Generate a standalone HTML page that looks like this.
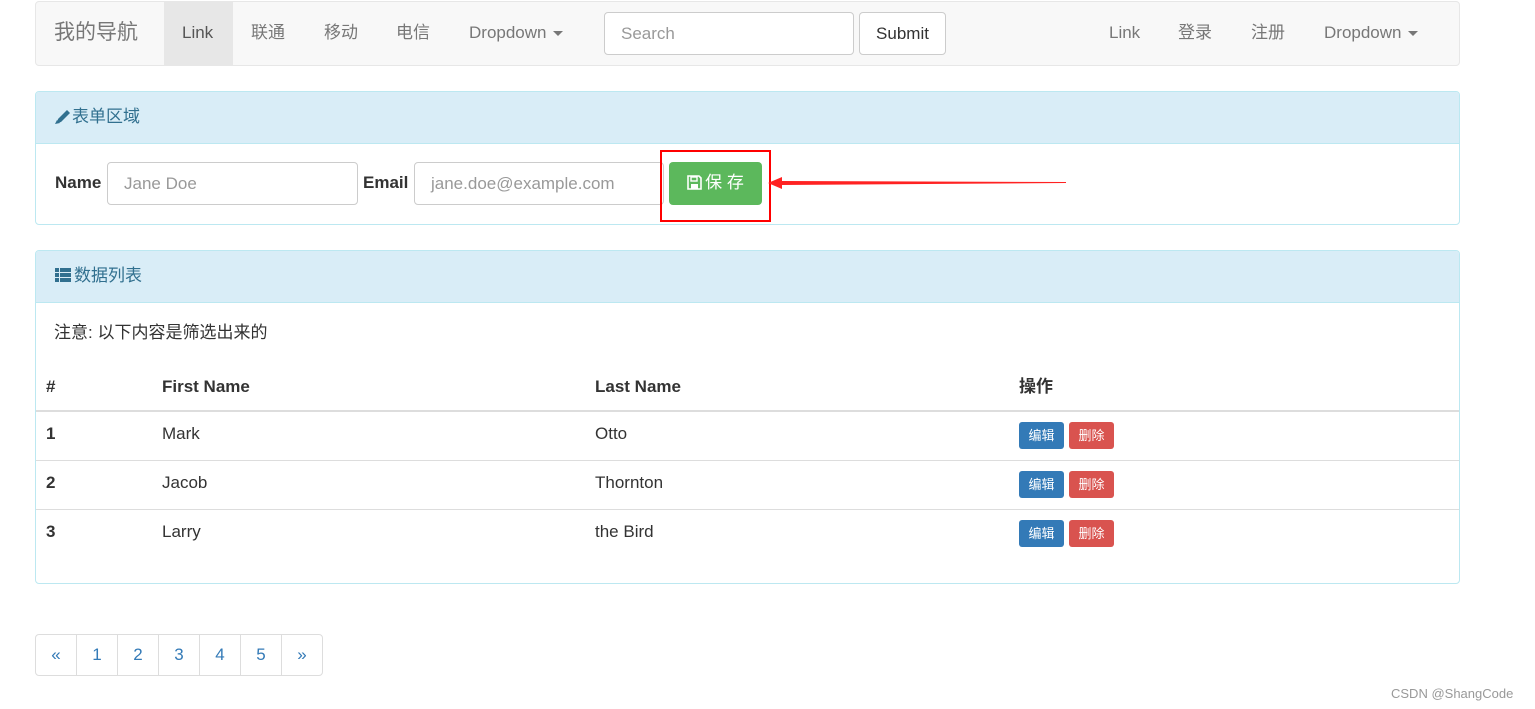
<!DOCTYPE html>
<html><head><meta charset="utf-8"><style>
*{box-sizing:border-box}
body{margin:0;width:1535px;height:709px;background:#fff;font-family:"Liberation Sans","Noto Sans CJK SC",sans-serif;font-size:17px;line-height:20px;color:#333;position:relative;overflow:hidden}
.a{position:absolute}
.nav{left:35px;top:1px;width:1425px;height:65px;background:#f8f8f8;border:1px solid #e7e7e7;border-radius:4px}
.ni{color:#777;top:23px;height:20px}
.inp{border:1px solid #ccc;border-radius:4px;background:#fff;color:#999;padding-left:16px;line-height:41px}
.panel{border:1px solid #bce8f1;border-radius:4px;left:35px;width:1425px;overflow:hidden}
.ph{background:#d9edf7;color:#31708f;height:52px;border-bottom:1px solid #bce8f1;padding:15px 18px;font-size:17px}
.caret{display:inline-block;border-top:5px solid #777;border-left:5px solid transparent;border-right:5px solid transparent;vertical-align:middle;margin-left:6px}
.btn{color:#fff;font-size:13px;border-radius:3px;width:45px;height:27px;line-height:27px;text-align:center}
.pg{top:634px;height:42px;width:42px;border:1px solid #ddd;color:#337ab7;text-align:center;line-height:40px}
</style></head><body>
<div class="a nav"></div>
<div class="a" style="left:54px;top:22px;font-size:21px;line-height:22px;color:#777">我的导航</div>
<div class="a" style="left:164px;top:2px;width:69px;height:63px;background:#e7e7e7"></div>
<div class="a ni" style="left:182px;color:#555">Link</div>
<div class="a ni" style="left:251px">联通</div>
<div class="a ni" style="left:324px">移动</div>
<div class="a ni" style="left:396px">电信</div>
<div class="a ni" style="left:469px">Dropdown<span class="caret"></span></div>
<div class="a inp" style="left:604px;top:12px;width:250px;height:43px">Search</div>
<div class="a" style="left:859px;top:12px;width:87px;height:43px;border:1px solid #ccc;border-radius:4px;background:#fff;text-align:center;line-height:41px">Submit</div>
<div class="a ni" style="left:1109px">Link</div>
<div class="a ni" style="left:1178px">登录</div>
<div class="a ni" style="left:1251px">注册</div>
<div class="a ni" style="left:1324px">Dropdown<span class="caret"></span></div>

<div class="a panel" style="top:91px;height:134px"><div class="ph"><svg width="18" height="16" viewBox="0 0 18 16" style="vertical-align:-2px"><path d="M3 15 L4 11 L13 2 L16 5 L7 14 Z" fill="#31708f"/><path d="M1 16 L3 12 L6 15 Z" fill="#31708f"/></svg>表单区域</div></div>
<div class="a" style="left:55px;top:173px;font-weight:bold">Name</div>
<div class="a inp" style="left:107px;top:162px;width:251px;height:43px">Jane Doe</div>
<div class="a" style="left:363px;top:173px;font-weight:bold">Email</div>
<div class="a inp" style="left:414px;top:162px;width:250px;height:43px">jane.doe@example.com</div>
<div class="a" style="left:669px;top:162px;width:93px;height:43px;background:#5cb85c;border-radius:4px;color:#fff;text-align:center;line-height:42px"><svg width="15" height="15" viewBox="0 0 15 15" style="vertical-align:-2px;margin-right:3px"><path d="M1 1 H12 L14 3 V14 H1 Z" fill="none" stroke="#fff" stroke-width="1.6"/><rect x="4" y="2" width="6" height="4" fill="none" stroke="#fff" stroke-width="1.4"/><rect x="4" y="9" width="7" height="5" fill="#fff"/></svg>保 存</div>
<div class="a" style="left:660px;top:150px;width:111px;height:72px;border:2px solid #f00"></div>
<svg class="a" style="left:768px;top:175px" width="300" height="16"><polygon points="0,8 14,2 14,6 298,7 298,8 14,10 14,14" fill="#f22"/></svg>

<div class="a panel" style="top:250px;height:334px"><div class="ph"><svg width="18" height="16" viewBox="0 0 18 16" style="vertical-align:-2px;margin-right:2px"><rect x="1" y="1" width="4" height="4" fill="#31708f"/><rect x="6" y="1" width="11" height="4" fill="#31708f"/><rect x="1" y="6" width="4" height="4" fill="#31708f"/><rect x="6" y="6" width="11" height="4" fill="#31708f"/><rect x="1" y="11" width="4" height="4" fill="#31708f"/><rect x="6" y="11" width="11" height="4" fill="#31708f"/></svg>数据列表</div></div>
<div class="a" style="left:54px;top:323px">注意: 以下内容是筛选出来的</div>
<div class="a" style="top:377px;left:46px;font-weight:bold">#</div>
<div class="a" style="top:377px;left:162px;font-weight:bold">First Name</div>
<div class="a" style="top:377px;left:595px;font-weight:bold">Last Name</div>
<div class="a" style="top:377px;left:1019px;font-weight:bold">操作</div>
<div class="a" style="left:36px;top:410px;width:1423px;height:2px;background:#ddd"></div>
<div class="a" style="left:36px;top:460px;width:1423px;height:1px;background:#ddd"></div>
<div class="a" style="left:36px;top:509px;width:1423px;height:1px;background:#ddd"></div>

<div class="a" style="top:424px;left:46px;font-weight:bold">1</div><div class="a" style="top:424px;left:162px">Mark</div><div class="a" style="top:424px;left:595px">Otto</div>
<div class="a" style="top:473px;left:46px;font-weight:bold">2</div><div class="a" style="top:473px;left:162px">Jacob</div><div class="a" style="top:473px;left:595px">Thornton</div>
<div class="a" style="top:522px;left:46px;font-weight:bold">3</div><div class="a" style="top:522px;left:162px">Larry</div><div class="a" style="top:522px;left:595px">the Bird</div>
<div class="a btn" style="left:1019px;top:422px;background:#337ab7">编辑</div><div class="a btn" style="left:1069px;top:422px;background:#d9534f">删除</div>
<div class="a btn" style="left:1019px;top:471px;background:#337ab7">编辑</div><div class="a btn" style="left:1069px;top:471px;background:#d9534f">删除</div>
<div class="a btn" style="left:1019px;top:520px;background:#337ab7">编辑</div><div class="a btn" style="left:1069px;top:520px;background:#d9534f">删除</div>

<div class="a pg" style="left:35px;border-radius:4px 0 0 4px">«</div>
<div class="a pg" style="left:76px">1</div>
<div class="a pg" style="left:117px">2</div>
<div class="a pg" style="left:158px">3</div>
<div class="a pg" style="left:199px">4</div>
<div class="a pg" style="left:240px">5</div>
<div class="a pg" style="left:281px;border-radius:0 4px 4px 0">»</div>
<div class="a" style="left:1391px;top:684px;font-size:13px;color:#999">CSDN @ShangCode</div>
</body></html>
